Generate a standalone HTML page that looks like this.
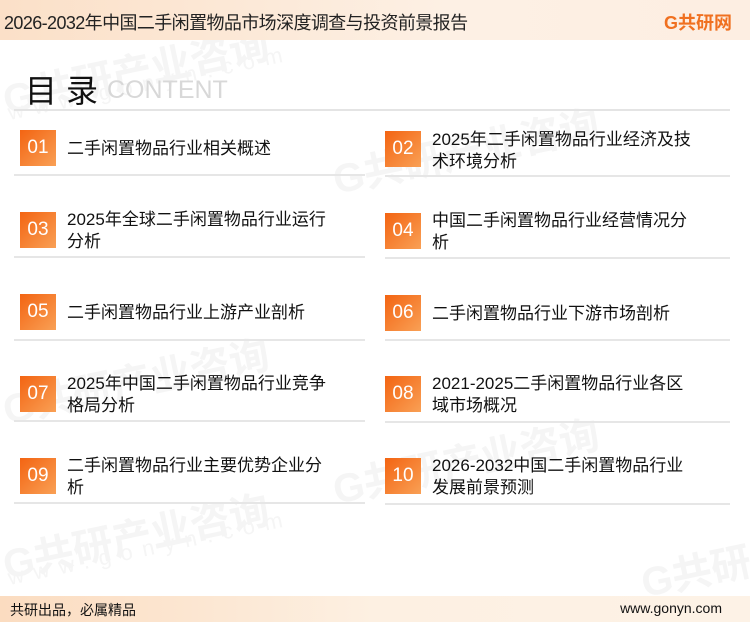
<!DOCTYPE html>
<html><head><meta charset="utf-8"><style>
*{margin:0;padding:0;box-sizing:border-box}
body{width:750px;height:622px;position:relative;background:#fff;font-family:"Liberation Sans","Noto Sans CJK SC",sans-serif;overflow:hidden;color:#111}
.hdr{position:absolute;left:0;top:0;width:750px;height:40px;background:linear-gradient(90deg,#fbe0c8,#fdf0e4 60%,#fdeee2)}
.hdr .t{position:absolute;left:4px;top:9px;font-size:18px;color:#222;letter-spacing:-0.6px}
.logo{position:absolute;left:664px;top:9px;font-size:18px;font-weight:bold;color:#f07020}
.wm{position:absolute;color:#f5f5f5;font-weight:bold;font-size:40px;transform:rotate(-12deg);white-space:nowrap}
.wm2{position:absolute;color:#f5f5f5;font-size:22px;letter-spacing:10px;transform:rotate(-12deg);white-space:nowrap}
.title{position:absolute;left:25px;top:66px;font-size:32px;color:#111;letter-spacing:9px}
.cont{position:absolute;left:107px;top:76px;font-size:25px;color:#d8d8d8}
.hl{position:absolute;left:14px;top:109px;width:716px;height:2px;background:#e4e4e4}
.box{position:absolute;width:36px;height:36px;background:linear-gradient(135deg,#f36412,#f9a055);color:#fff;font-size:19px;text-align:center;line-height:36px}
.txt{position:absolute;font-size:17px;line-height:22px;color:#111}
.ln{position:absolute;height:2px;background:#e6e6e6}
.ftr{position:absolute;left:0;top:596px;width:750px;height:26px;background:linear-gradient(90deg,#fbdcc0,#fdf0e2 50%,#fdf2e6)}
.ftr .a{position:absolute;left:10px;top:4px;font-size:14px}
.ftr .b{position:absolute;right:28px;top:4px;font-size:14px}
</style></head><body>
<div class="wm" style="left:0;top:40px">G共研产业咨询</div>
<div class="wm2" style="left:5px;top:70px">www.gonyn.com</div>
<div class="wm" style="left:330px;top:120px">G共研产业咨询</div>
<div class="wm" style="left:0;top:350px">G共研产业咨询</div>
<div class="wm" style="left:330px;top:430px">G共研产业咨询</div>
<div class="wm" style="left:0;top:505px">G共研产业咨询</div>
<div class="wm2" style="left:5px;top:535px">www.gonyn.com</div>
<div class="wm" style="left:640px;top:540px">G共研</div>
<div class="hdr"><div class="t">2026-2032年中国二手闲置物品市场深度调查与投资前景报告</div><div class="logo">G共研网</div></div>
<div class="title">目录</div><div class="cont">CONTENT</div>
<div class="hl"></div>

<div class="box" style="left:20px;top:130px">01</div><div class="txt" style="left:67px;top:138px">二手闲置物品行业相关概述</div><div class="ln" style="left:14px;top:174px;width:351px"></div>
<div class="box" style="left:385px;top:131px">02</div><div class="txt" style="left:432px;top:129px">2025年二手闲置物品行业经济及技<br>术环境分析</div><div class="ln" style="left:385px;top:175px;width:345px"></div>

<div class="box" style="left:20px;top:212px">03</div><div class="txt" style="left:67px;top:209px">2025年全球二手闲置物品行业运行<br>分析</div><div class="ln" style="left:14px;top:256px;width:351px"></div>
<div class="box" style="left:385px;top:213px">04</div><div class="txt" style="left:432px;top:210px">中国二手闲置物品行业经营情况分<br>析</div><div class="ln" style="left:385px;top:257px;width:345px"></div>

<div class="box" style="left:20px;top:294px">05</div><div class="txt" style="left:67px;top:302px">二手闲置物品行业上游产业剖析</div><div class="ln" style="left:14px;top:339px;width:351px"></div>
<div class="box" style="left:385px;top:295px">06</div><div class="txt" style="left:432px;top:303px">二手闲置物品行业下游市场剖析</div><div class="ln" style="left:385px;top:339px;width:345px"></div>

<div class="box" style="left:20px;top:376px">07</div><div class="txt" style="left:67px;top:373px">2025年中国二手闲置物品行业竞争<br>格局分析</div><div class="ln" style="left:14px;top:420px;width:351px"></div>
<div class="box" style="left:385px;top:376px">08</div><div class="txt" style="left:432px;top:373px">2021-2025二手闲置物品行业各区<br>域市场概况</div><div class="ln" style="left:385px;top:421px;width:345px"></div>

<div class="box" style="left:20px;top:458px">09</div><div class="txt" style="left:67px;top:455px">二手闲置物品行业主要优势企业分<br>析</div><div class="ln" style="left:14px;top:502px;width:351px"></div>
<div class="box" style="left:385px;top:458px">10</div><div class="txt" style="left:432px;top:455px">2026-2032中国二手闲置物品行业<br>发展前景预测</div><div class="ln" style="left:385px;top:503px;width:345px"></div>

<div class="ftr"><div class="a">共研出品，必属精品</div><div class="b">www.gonyn.com</div></div>
</body></html>
